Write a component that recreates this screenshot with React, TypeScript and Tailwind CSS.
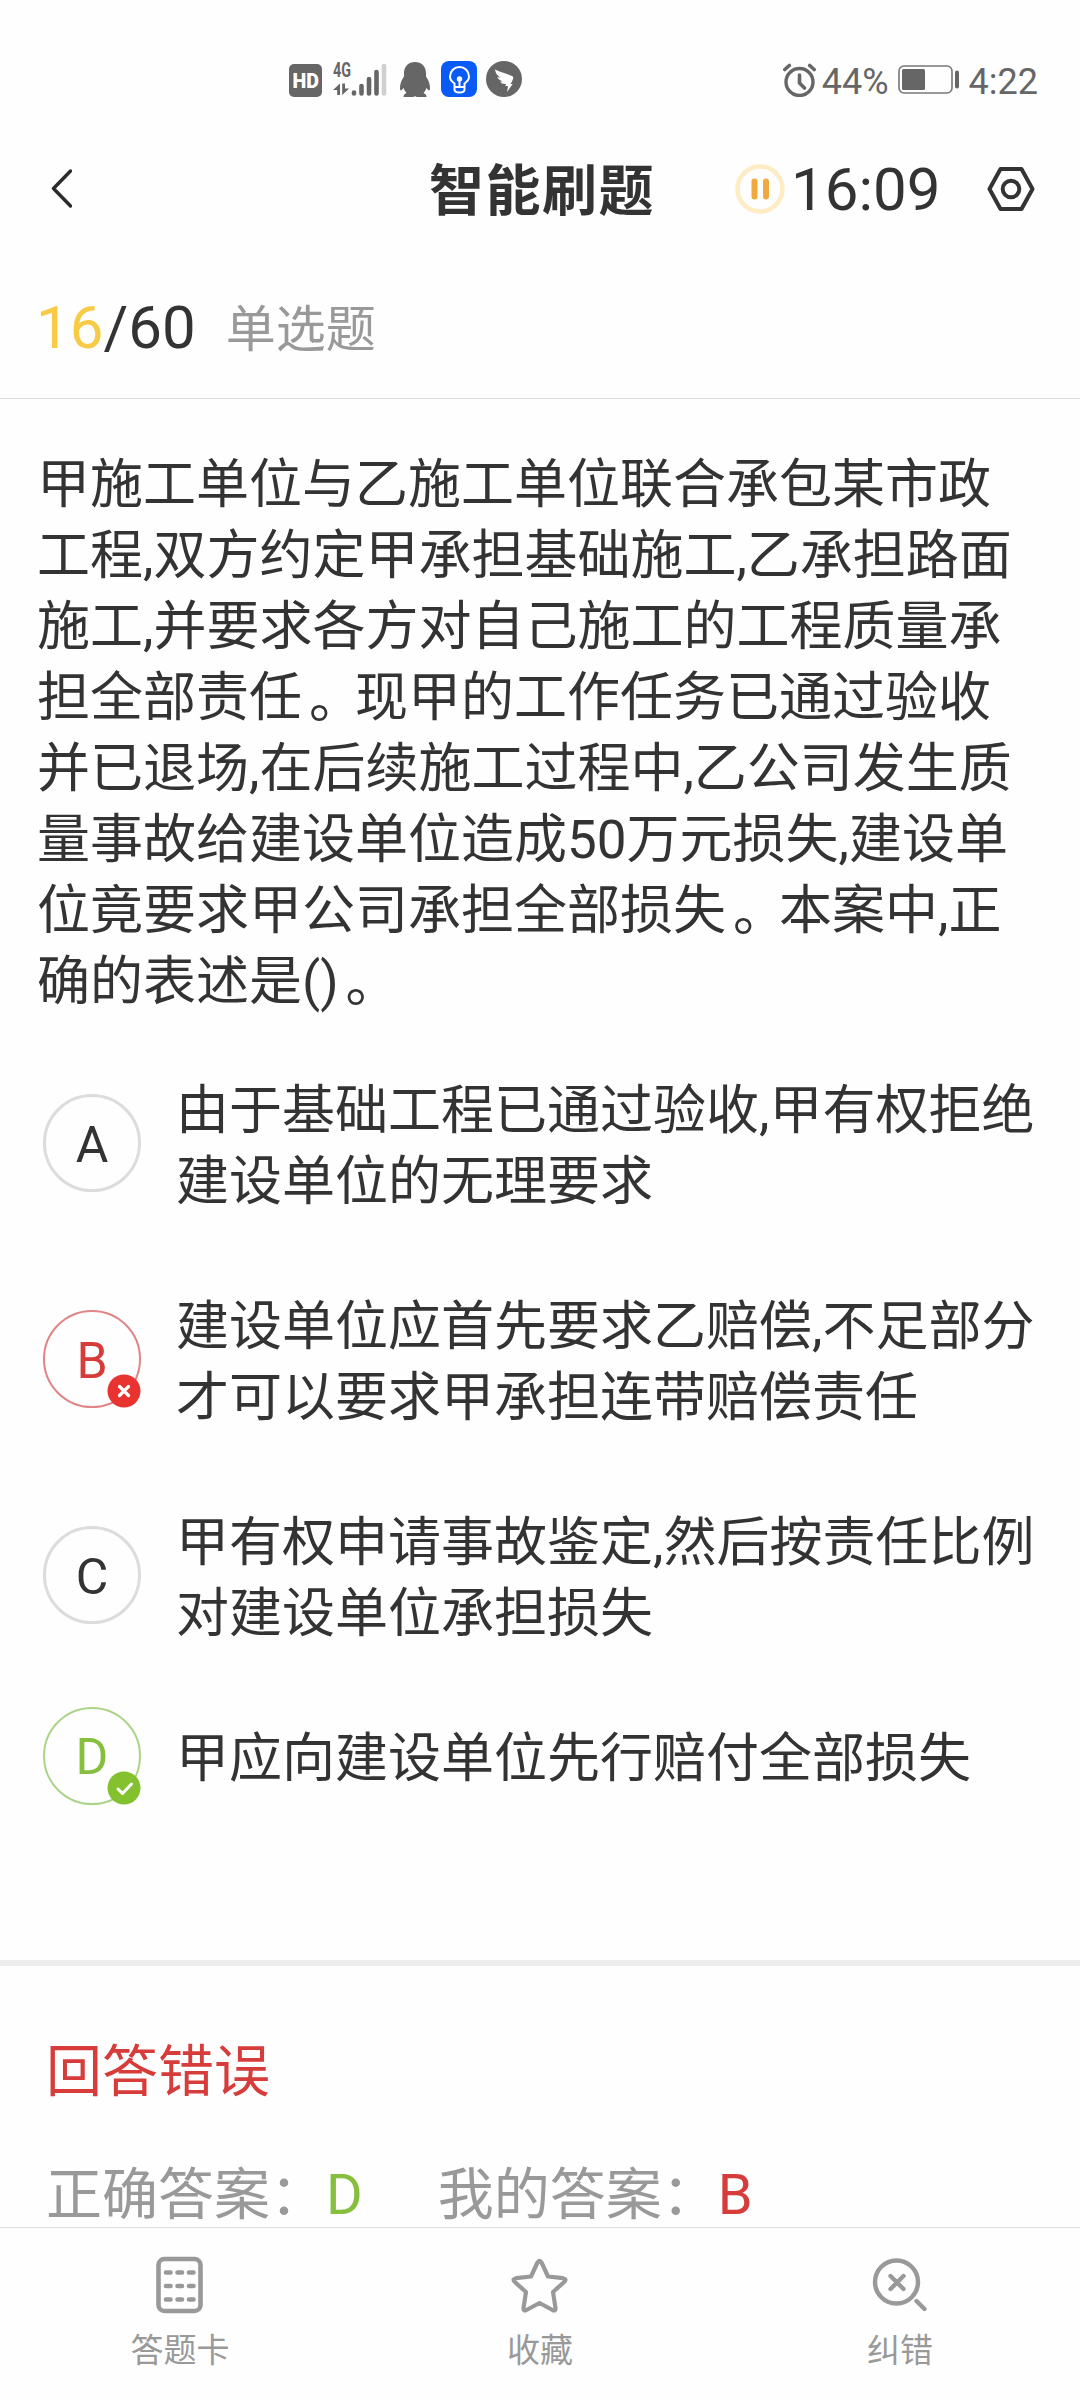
import { Fragment } from "react";
import type { ReactNode } from "react";

const questionLines = [
  "甲施工单位与乙施工单位联合承包某市政",
  "工程,双方约定甲承担基础施工,乙承担路面",
  "施工,并要求各方对自己施工的工程质量承",
  "担全部责任。现甲的工作任务已通过验收",
  "并已退场,在后续施工过程中,乙公司发生质",
  "量事故给建设单位造成50万元损失,建设单",
  "位竟要求甲公司承担全部损失。本案中,正",
  "确的表述是()。",
];

type OptionState = "normal" | "wrong" | "right";

const options: { key: string; state: OptionState; lines: string[] }[] = [
  { key: "A", state: "normal", lines: ["由于基础工程已通过验收,甲有权拒绝", "建设单位的无理要求"] },
  { key: "B", state: "wrong", lines: ["建设单位应首先要求乙赔偿,不足部分", "才可以要求甲承担连带赔偿责任"] },
  { key: "C", state: "normal", lines: ["甲有权申请事故鉴定,然后按责任比例", "对建设单位承担损失"] },
  { key: "D", state: "right", lines: ["甲应向建设单位先行赔付全部损失"] },
];

const circleStyles: Record<OptionState, string> = {
  normal: "border-[3px] border-[#dcdcdc] text-[#333333]",
  wrong: "border-2 border-[#e08585] text-[#d63c3a]",
  right: "border-2 border-[#acd488] text-[#86bf3d]",
};

function StatusBar() {
  return (
    <div className="flex h-[120px] shrink-0 items-start pt-[61px] text-[#666666]">
      {/* Left group: HD, signal and notification icons */}
      <div className="ml-[289px] flex h-9 items-center">
        <svg width="33" height="33" viewBox="0 0 33 33" className="mt-0.5">
          <rect width="33" height="33" rx="5" fill="#666" />
          <text x="3.500" y="23.700" fontFamily="Roboto" fontWeight="900" fontSize="20" fill="#fff" textLength="26.500" lengthAdjust="spacingAndGlyphs">HD</text>
        </svg>
        <svg width="54" height="52" viewBox="0 -8 54 52" className="ml-[11px]">
          <text x="0" y="16" fontFamily="Roboto" fontWeight="700" fontSize="20" fill="#666" textLength="18" lengthAdjust="spacingAndGlyphs">4G</text>
          <path d="M7 22.500V34H4.200V29H0zM9.200 22.500V34l7-6.500H12v-5z" fill="#666" />
          <g stroke="#666" strokeWidth="4.600" strokeLinecap="round">
            <path d="M21 31.500V32.500M28.500 25V32.500M36 18V32.500M43.500 11V32.500" />
            <path d="M51 5V32.500" stroke="#d0d0d0" />
          </g>
        </svg>
        <svg width="30" height="36" viewBox="0 0 30 36" className="ml-[13px]" fill="#666">
          <path d="M15 1C8.500 1 4 5.500 4 12v3.500C1.500 19 0 23 0 27c0 3 1 3.500 3.500 0 .7 2 1.700 3.700 3 5-2 .8-3 2-3 4h9.500l2-.7 2 .7h9.500c0-2-1-3.200-3-4 1.300-1.300 2.300-3 3-5 2.500 3.500 3.500 3 3.500 0 0-4-1.500-8-4-11.500V12C26 5.500 21.500 1 15 1z" />
        </svg>
        <svg width="36" height="36" viewBox="0 0 36 36" className="ml-[11px]">
          <rect width="36" height="36" rx="8" fill="#0a5af5" />
          <g fill="none" stroke="#fff" strokeWidth="2">
            <path d="M13.500 26v-3.500C10.500 20.500 9 18 9 15.500a9.500 9.500 0 0 1 19 0c0 2.500-1.500 5-4.500 7V26zM13.500 26v2.500q0 3 5 3t5-3V26M18.500 19v7" />
          </g>
          <circle cx="18.500" cy="18" r="2.700" fill="#fff" />
        </svg>
        <svg width="36" height="36" viewBox="0 0 36 36" className="ml-[9px]">
          <circle cx="18" cy="18" r="18" fill="#666" />
          <path d="M9 8.500c6 3 11 4 17 6.500 1.500.8 1.500 2 .7 4L24.500 23h2.200L21 31l1-6h-2.800l1-2c-3 .2-5-.6-6-2.500l3-.2c-3-.6-5-2-6-4.300l3.500.7c-3-1.700-5.200-4-5.700-8.200z" fill="#fff" />
        </svg>
      </div>

      {/* Right group: alarm, battery, clock */}
      <div className="mr-[42px] ml-auto flex h-9 items-center text-[36px] leading-9">
        <svg width="33" height="34" viewBox="0 0 33 34" className="mt-px" fill="none" stroke="#666">
          <circle cx="16.500" cy="19" r="13.500" strokeWidth="3.400" />
          <path d="M16.500 12v8l5 5" strokeWidth="3.600" strokeLinecap="round" strokeLinejoin="round" />
          <path d="M1.800 6.500l4.500-4M31.200 6.500l-4.500-4" strokeWidth="3.600" strokeLinecap="round" />
        </svg>
        <span className="ml-1.5 pt-[5px]">44%</span>
        <svg width="62" height="30" viewBox="0 0 62 30" className="mt-0.5 ml-[9px]">
          <rect x="1" y="1" width="53" height="27" rx="5" fill="none" stroke="#777" strokeWidth="1.600" />
          <rect x="4" y="4" width="23" height="21" rx="1.500" fill="#666" />
          <rect x="57" y="5.500" width="4" height="18" rx="2" fill="#666" />
        </svg>
        <span className="ml-[9px] pt-[5px]">4:22</span>
      </div>
    </div>
  );
}

function Header() {
  return (
    <header className="flex h-[138px] shrink-0 items-center text-[#333333]">
      <svg width="22" height="40" viewBox="0 0 22 40" className="ml-[50px]" fill="none" stroke="#2b2b2b" strokeWidth="3.400" strokeLinecap="round" strokeLinejoin="round">
        <path d="M20.500 2L3.500 19.500 20.500 37" />
      </svg>
      <h1 className="ml-[357px] pt-1 text-[55px] leading-none font-bold tracking-[1.500px]">智能刷题</h1>
      <svg width="50" height="50" viewBox="0 0 50 50" className="ml-[80px]">
        <circle cx="25" cy="25" r="22.500" fill="none" stroke="#fdecc4" strokeWidth="4.500" />
        <path d="M19.500 17.500v15M31 17.500v15" stroke="#f0a93c" strokeWidth="6" strokeLinecap="round" />
      </svg>
      <span className="ml-1.5 pt-0.5 text-[60px] leading-none">16:09</span>
      <svg width="48" height="46" viewBox="0 0 48 46" className="mr-[45px] ml-auto" fill="none" stroke="#333" strokeWidth="4">
        <path d="M13.500 3h21L45.500 23 34.500 43h-21L2.500 23z" strokeLinejoin="round" />
        <circle cx="24" cy="23" r="8.300" />
      </svg>
    </header>
  );
}

// The full stop sits a little closer to the middle of its cell
function TextLine({ text }: { text: string }) {
  return (
    <p>
      {text.split("。").map((part, i) => (
        <Fragment key={i}>
          {i > 0 && <span className="-mr-[7px] ml-[7px] align-[-2px] leading-none">。</span>}
          {part}
        </Fragment>
      ))}
    </p>
  );
}

function OptionBadge({ state }: { state: OptionState }) {
  if (state === "normal") return null;
  return (
    <svg width="34" height="34" viewBox="0 0 34 34" className="absolute -right-0.5 -bottom-0.5">
      <circle cx="17" cy="17" r="16.500" fill={state === "wrong" ? "#e83331" : "#83c12f"} />
      <g fill="none" stroke="#fff" strokeLinecap="round" strokeLinejoin="round">
        {state === "wrong" ? (
          <path d="M12.500 12.500l9 9M21.500 12.500l-9 9" strokeWidth="3.200" />
        ) : (
          <path d="M11 18l4.500 4.500 9-9.500" strokeWidth="3" />
        )}
      </g>
    </svg>
  );
}

function TabItem({ label, children }: { label: string; children: ReactNode }) {
  return (
    <button className="flex flex-1 flex-col items-center pt-[27px]">
      {children}
      <span className="mt-[15px] text-[33px] leading-[42px]">{label}</span>
    </button>
  );
}

export default function App() {
  return (
    <div
      lang="zh-CN"
      className="flex h-[2400px] w-[1080px] flex-col overflow-hidden bg-[#fefefe] font-[Roboto,'Noto_Sans_CJK_SC',sans-serif] text-[#333333]"
    >
      <StatusBar />
      <Header />

      <div className="flex h-[141px] shrink-0 items-center border-b border-[#dedede] pl-9 text-[60px] leading-none">
        <span className="text-[#f8cb46]">16</span>
        <span>/60</span>
        <span className="ml-[30px] pt-[3px] text-[50px] text-[#999999]">单选题</span>
      </div>

      <main className="min-h-0 flex-1 overflow-hidden">
        {/* Question */}
        <div className="pt-[51px] pl-[37px] text-[53px] leading-[71px] whitespace-nowrap">
          {questionLines.map((line) => (
            <TextLine key={line} text={line} />
          ))}
        </div>

        <ul className="mt-[54px] flex flex-col gap-[74px] pl-[43px] text-[53px] leading-[71px] whitespace-nowrap">
          {options.map((option) => (
            <li key={option.key} className="flex items-center">
              <div className={`relative -my-4 flex size-[98px] items-center justify-center rounded-full pt-[3px] text-[50px] leading-none ${circleStyles[option.state]}`}>
                {option.key}
                <OptionBadge state={option.state} />
              </div>
              <div className="-mb-1 ml-[35px] pt-1">
                {option.lines.map((line) => (
                  <TextLine key={line} text={line} />
                ))}
              </div>
            </li>
          ))}
        </ul>

        {/* Result */}
        <section className="mt-[169px] border-t-[6px] border-[#ededed] pt-[71px] pl-[46px] text-[56px] leading-[70px] whitespace-nowrap">
          <h2 className="text-[#d63c3a]">回答错误</h2>
          <div className="mt-[53px] flex text-[#999999]">
            <p>
              正确答案：<span className="text-[#86bf3d]">D</span>
            </p>
            <p className="ml-[75px]">
              我的答案：<span className="text-[#d63c3a]">B</span>
            </p>
          </div>
        </section>
      </main>

      <nav className="flex h-[173px] shrink-0 border-t border-[#dedede] bg-[#fefefe] text-[#999999]">
        <TabItem label="答题卡">
          <svg width="48" height="60" viewBox="0 0 48 60" fill="none" stroke="#999">
            <rect x="2.500" y="4" width="42" height="52" rx="6" strokeWidth="4.600" />
            <path d="M10 17.500h4.500M21.500 17.500h4.500M33 17.500h4.500M10 31h4.500M21.500 31h4.500M33 31h4.500M10 44.500h4.500M21.500 44.500h4.500M33 44.500h4.500" strokeWidth="4.600" strokeLinecap="round" />
          </svg>
        </TabItem>
        <TabItem label="收藏">
          <svg width="60" height="60" viewBox="0 0 60 60" fill="none" stroke="#999" strokeWidth="4.200" strokeLinejoin="round">
            <path d="M27.500 7.500q2-3.500 4 0L38 21.500 53 23.200q4 .7 1.500 3.500L43 37l2.500 16q.2 3.500-3 2L29.500 48 16.500 55q-3.200 1.500-3-2L16 37 4.500 26.700q-2.500-2.800 1.500-3.500L21 21.500z" />
          </svg>
        </TabItem>
        <TabItem label="纠错">
          <svg width="60" height="60" viewBox="0 0 60 60" fill="none" stroke="#999" strokeWidth="4.400" strokeLinecap="round">
            <circle cx="26.500" cy="27" r="21.500" />
            <path d="M20.500 21l13 13M33.500 21l-13 13M46.500 46l8 8" />
          </svg>
        </TabItem>
      </nav>
    </div>
  );
}
